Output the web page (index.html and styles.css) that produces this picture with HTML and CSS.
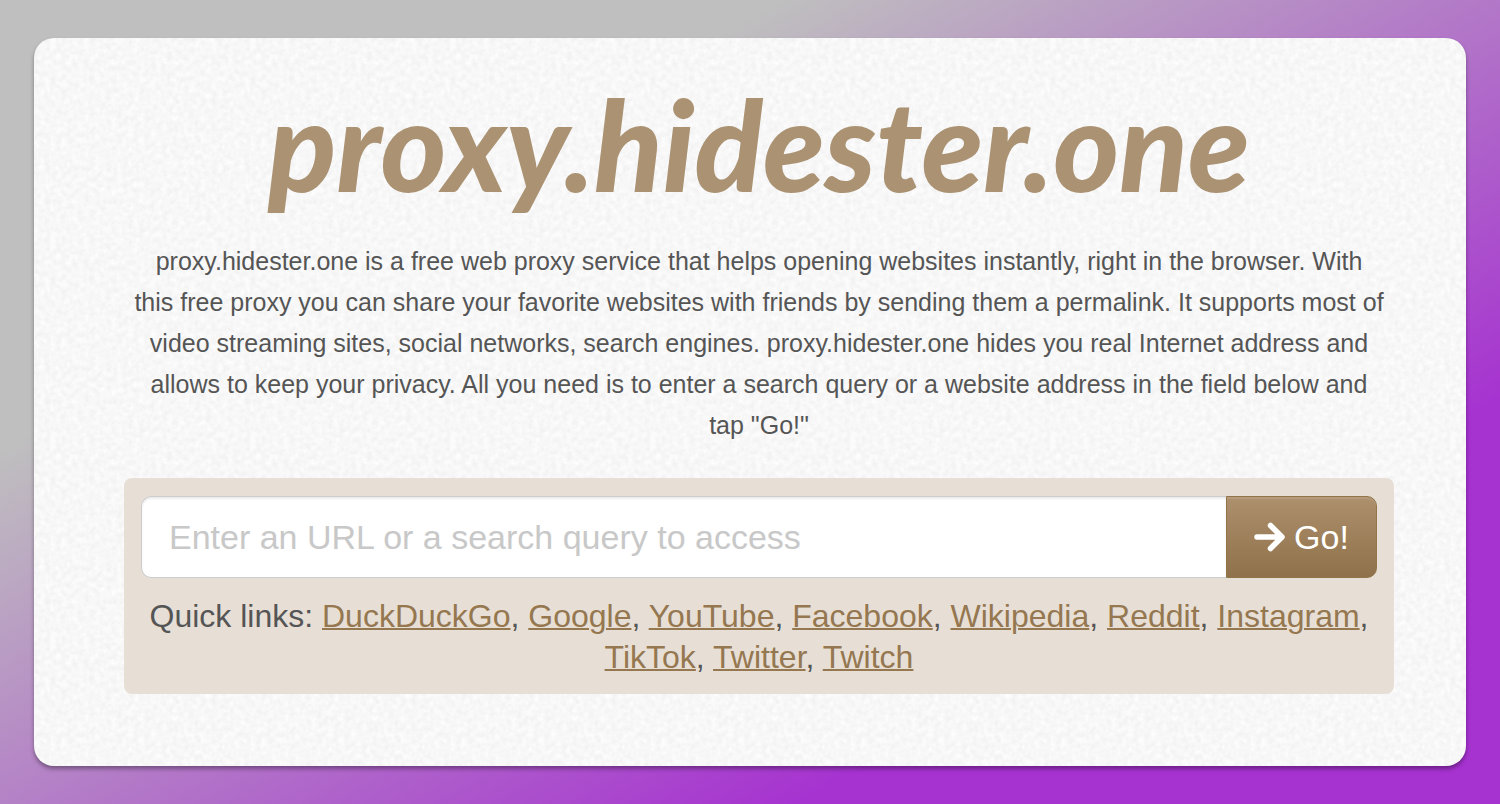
FILE: index.html
```html
<!DOCTYPE html>
<html lang="en">
<head>
<meta charset="utf-8">
<title>proxy.hidester.one</title>
<link rel="stylesheet" href="styles.css">
</head>
<body>
<main class="card">
  <h1 class="title">proxy.hidester.one</h1>
  <p class="intro">proxy.hidester.one is a free web proxy service that helps opening websites instantly, right in the browser. With<br> this free proxy you can share your favorite websites with friends by sending them a permalink. It supports most of<br> video streaming sites, social networks, search engines. proxy.hidester.one hides you real Internet address and<br> allows to keep your privacy. All you need is to enter a search query or a website address in the field below and<br> tap "Go!"</p>
  <section class="well">
    <form class="search">
      <input class="search-input" type="text" aria-label="URL or search query" placeholder="Enter an URL or a search query to access">
      <button class="search-button" type="submit">
        <svg class="arrow" viewBox="0 0 32 30" aria-hidden="true"><path d="M3 15H27M16.500 3.500L28 15L16.500 26.500" fill="none" stroke="#fff" stroke-width="5.500" stroke-linecap="round" stroke-linejoin="round"/></svg>
        <span>Go!</span>
      </button>
    </form>
    <p class="links">Quick links: <a href="#">DuckDuckGo</a>, <a href="#">Google</a>, <a href="#">YouTube</a>, <a href="#">Facebook</a>, <a href="#">Wikipedia</a>, <a href="#">Reddit</a>, <a href="#">Instagram</a>, <a href="#">TikTok</a>, <a href="#">Twitter</a>, <a href="#">Twitch</a></p>
  </section>
</main>
</body>
</html>
```
FILE: styles.css
```css
* { box-sizing: border-box; }

body {
  margin: 0;
  min-height: 100vh;
  padding: 38px 34px;
  background: linear-gradient(150deg, #bfbfbf 27%, #a632d0 76%) no-repeat;
  font-family: "Liberation Sans", Arial, sans-serif;
  color: #555;
}

.card {
  padding: 40px 72px 72px 90px;
  border-radius: 20px;
  background-color: #f8f8f8;
  background-image: url("data:image/svg+xml,%3Csvg xmlns='http://www.w3.org/2000/svg' width='200' height='200'%3E%3Cfilter id='n' x='0' y='0' width='100%25' height='100%25' color-interpolation-filters='sRGB'%3E%3CfeTurbulence type='fractalNoise' baseFrequency='0.18' numOctaves='3' seed='4' stitchTiles='stitch'/%3E%3CfeColorMatrix values='.07 0 0 0 .935 .07 0 0 0 .935 .07 0 0 0 .935 0 0 0 0 1'/%3E%3C/filter%3E%3Crect width='200' height='200' filter='url(%23n)'/%3E%3C/svg%3E");
  box-shadow: 0 3px 4px rgba(0, 0, 0, 0.35);
  text-align: center;
}

.title {
  margin: 0 0 31px;
  font: italic 900 126px/132px Lato, sans-serif;
  color: #aa9272;
}

.intro {
  margin: 0 0 32px;
  font-size: 25px;
  line-height: 41px;
}

.well {
  padding: 18px 17px 16px;
  border-radius: 8px;
  background: #e7dfd6;
}

.search {
  display: flex;
}

.search-input {
  flex: 1;
  min-width: 0;
  height: 82px;
  padding: 0 27px;
  border: 1px solid #ccc;
  border-right: 0;
  border-radius: 10px 0 0 10px;
  background: #fff;
  box-shadow: inset 0 2px 2px rgba(0, 0, 0, 0.08);
  font: 34px "Liberation Sans", Arial, sans-serif;
  color: #555;
}

.search-input::placeholder {
  color: #c8c8c8;
}

.search-button {
  display: flex;
  align-items: center;
  justify-content: center;
  gap: 8px;
  width: 151px;
  padding: 0;
  border: 1px solid #937448;
  border-radius: 0 10px 10px 0;
  background: linear-gradient(#ad906c, #8f724b);
  box-shadow: inset 0 2px 0 rgba(255, 255, 255, 0.1);
  font: 34px "Liberation Sans", Arial, sans-serif;
  color: #fff;
}

.arrow {
  width: 32px;
  height: 30px;
}

.links {
  margin: 18px 0 0;
  font-size: 32px;
  line-height: 41px;
}

.links a {
  color: #957750;
  text-decoration-thickness: 2px;
}
```
